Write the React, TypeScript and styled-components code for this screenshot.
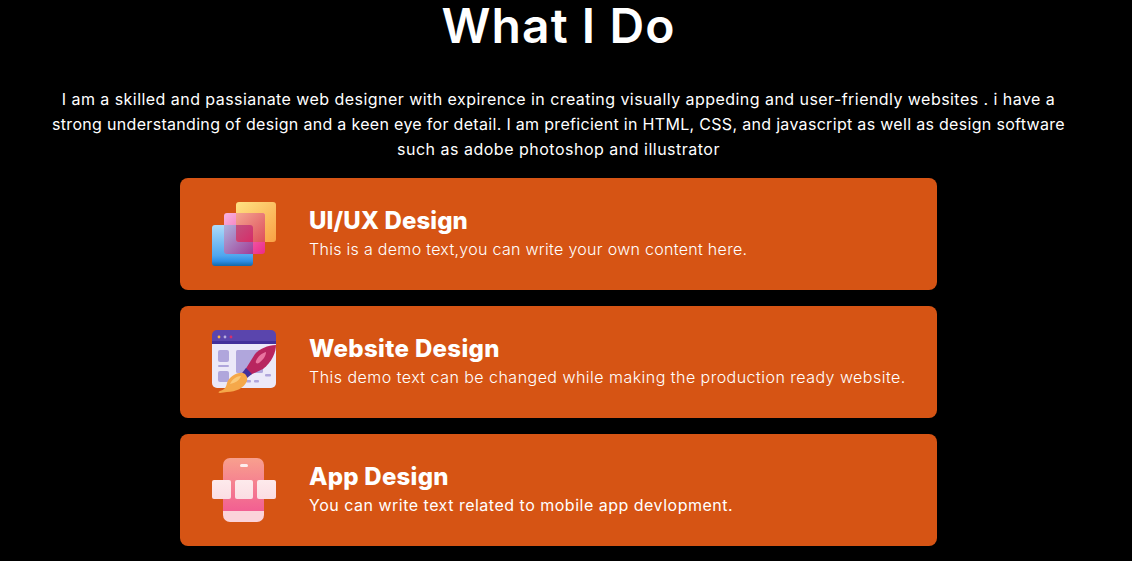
import styled, { createGlobalStyle } from 'styled-components'

const GlobalStyle = createGlobalStyle`
    html, body {
        margin: 0;
        padding: 0;
        background: #000;
        overflow: hidden;
    }
`

const Page = styled.section`
    display: flex;
    flex-direction: column;
    align-items: center;
    width: 1117px;
    height: 561px;
    overflow: hidden;
    color: #fff;
    font-family: "Inter", "Liberation Sans", sans-serif;
`

const Heading = styled.h1`
    margin: 0;
    height: 51px;
    font-size: 48px;
    line-height: 51px;
    font-weight: 600;
    letter-spacing: 1.1px;
`

const Intro = styled.p`
    margin: 36px 0 16px;
    width: 1040px;
    font-size: 16px;
    line-height: 25px;
    text-align: center;
`

const IntroLine = styled.span<{ $spacing: number }>`
    display: block;
    letter-spacing: ${p => p.$spacing}px;
`

const CardList = styled.div`
    display: flex;
    flex-direction: column;
    gap: 16px;
    width: 757px;
`

const Card = styled.article`
    display: flex;
    align-items: center;
    gap: 33px;
    height: 112px;
    padding: 0 32px;
    box-sizing: border-box;
    background: #d65414;
    border-radius: 8px;
`

const IconBox = styled.svg`
    flex: none;
    width: 64px;
    height: 64px;
`

const CardBody = styled.div`
    display: flex;
    flex-direction: column;
`

const CardTitle = styled.h2<{ $spacing: number }>`
    margin: 0 0 2px;
    font-size: 24px;
    line-height: 28px;
    font-weight: 800;
    letter-spacing: ${p => p.$spacing}px;
`

const CardText = styled.p<{ $weight: number; $spacing: number }>`
    margin: 0;
    font-size: 16px;
    line-height: 24px;
    white-space: nowrap;
    font-weight: ${p => p.$weight};
    letter-spacing: ${p => p.$spacing}px;
`

function LayersIcon() {
    return (
        <IconBox viewBox="0 0 64 64">
            <defs>
                <linearGradient id="yellowFill" x1="0" y1="0" x2="1" y2="1">
                    <stop offset="0" stopColor="#ffe283" />
                    <stop offset="1" stopColor="#f9a145" />
                </linearGradient>
                <linearGradient id="pinkFill" x1="0" y1="0" x2="1" y2="1">
                    <stop offset="0" stopColor="#f8b4e0" />
                    <stop offset="1" stopColor="#ec2a88" />
                </linearGradient>
                <linearGradient id="blueFill" x1="0" y1="0" x2="0" y2="1">
                    <stop offset="0" stopColor="#aedbf9" />
                    <stop offset="0.75" stopColor="#4fa6ee" />
                    <stop offset="0.88" stopColor="#2f8fe6" />
                    <stop offset="1" stopColor="#1468a8" />
                </linearGradient>
                <linearGradient id="pinkBlue" x1="0" y1="0" x2="1" y2="1">
                    <stop offset="0" stopColor="#aeb2dd" />
                    <stop offset="1" stopColor="#a23c96" />
                </linearGradient>
                <linearGradient id="pinkYellow" x1="0" y1="0" x2="1" y2="1">
                    <stop offset="0" stopColor="#f4a590" />
                    <stop offset="1" stopColor="#dd4f5c" />
                </linearGradient>
                <linearGradient id="tripleFill" x1="0" y1="0" x2="1" y2="1">
                    <stop offset="0" stopColor="#c2527f" />
                    <stop offset="1" stopColor="#d62c68" />
                </linearGradient>
            </defs>
            <rect x="24" y="0" width="40" height="40" rx="3" fill="url(#yellowFill)" />
            <rect x="12" y="11" width="41" height="41" rx="3" fill="url(#pinkFill)" />
            <rect x="0" y="23" width="41" height="41" rx="3" fill="url(#blueFill)" />
            <path d="M15 23H38a3 3 0 0 1 3 3V52H15a3 3 0 0 1-3-3V23z" fill="url(#pinkBlue)" />
            <path d="M24 11H50a3 3 0 0 1 3 3V40H27a3 3 0 0 1-3-3V11z" fill="url(#pinkYellow)" />
            <path d="M24 23H38a3 3 0 0 1 3 3V40H27a3 3 0 0 1-3-3V23z" fill="url(#tripleFill)" />
        </IconBox>
    )
}

function BrowserIcon() {
    return (
        <IconBox viewBox="0 0 64 64">
            <path d="M5 0H59a5 5 0 0 1 5 5V14H0V5a5 5 0 0 1 5-5z" fill="#5a45ad" />
            <rect y="11" width="64" height="3" fill="#43309a" />
            <path d="M0 14H64V53a5 5 0 0 1-5 5H5a5 5 0 0 1-5-5z" fill="#ece9f8" />
            <circle cx="7" cy="7" r="1.4" fill="#f6b545" />
            <circle cx="13" cy="7" r="1.4" fill="#b7aee0" />
            <circle cx="19" cy="7" r="1.4" fill="#d62f6e" />
            <g fill="#b0a6dc">
                <rect x="6" y="20" width="11" height="12" rx="2" />
                <rect x="6" y="35" width="11" height="2" rx="1" />
                <rect x="6" y="41" width="11" height="11" rx="2" />
                <rect x="24" y="20" width="27" height="23" rx="1.5" />
                <rect x="53" y="44" width="6" height="2.5" rx="1" />
                <rect x="34" y="50" width="5" height="2.5" rx="1" />
                <rect x="42" y="50" width="5" height="2.5" rx="1" />
            </g>
            <path d="M33 40L43 24C47 19 56 15 64 15C64 22 60 32 51 39L38 45z" fill="#b8255f" />
            <path d="M44 31C46 26 50 23 54 22C54 26 51 30 47 33C45 34 43 33 44 31z" fill="#e9739f" />
            <path d="M34 38L40 44L35 48L30 43z" fill="#43309a" />
            <path d="M31 43C34 44 36 47 35 51C32 58 24 62 15 62L8 63C6 63 6 62 8 61C12 60 14 58 15 53C17 47 25 42 31 43z" fill="#f5a84a" />
            <path d="M29 46C25 46 20 49 18 54C23 53 27 51 29 46z" fill="#fbc878" />
        </IconBox>
    )
}

function PhoneIcon() {
    return (
        <IconBox viewBox="0 0 64 64">
            <defs>
                <linearGradient id="phoneFill" x1="0" y1="0" x2="0" y2="1">
                    <stop offset="0" stopColor="#f8a08e" />
                    <stop offset="1" stopColor="#f25f92" />
                </linearGradient>
                <linearGradient id="tileFill" x1="0" y1="0" x2="0" y2="1">
                    <stop offset="0" stopColor="#fdeaec" />
                    <stop offset="1" stopColor="#fbdde3" />
                </linearGradient>
            </defs>
            <path d="M18 0H45a7 7 0 0 1 7 7V53H11V7a7 7 0 0 1 7-7z" fill="url(#phoneFill)" />
            <path d="M11 53H52V57a7 7 0 0 1-7 7H18a7 7 0 0 1-7-7z" fill="#fbd3da" />
            <rect x="28" y="6" width="8" height="3" rx="1.5" fill="#fdeeee" />
            <rect x="0" y="22" width="19" height="19" rx="2" fill="url(#tileFill)" />
            <rect x="23" y="22" width="18" height="19" rx="2" fill="url(#tileFill)" />
            <rect x="45" y="22" width="19" height="19" rx="2" fill="url(#tileFill)" />
        </IconBox>
    )
}

export default function App() {
    return (
        <Page>
            <GlobalStyle />
            <Heading>What I Do</Heading>
            <Intro>
                <IntroLine $spacing={0.45}>I am a skilled and passianate web designer with expirence in creating visually appeding and user-friendly websites . i have a</IntroLine>
                <IntroLine $spacing={0.31}>strong understanding of design and a keen eye for detail. I am preficient in HTML, CSS, and javascript as well as design software</IntroLine>
                <IntroLine $spacing={0.5}>such as adobe photoshop and illustrator</IntroLine>
            </Intro>
            <CardList>
                <Card>
                    <LayersIcon />
                    <CardBody>
                        <CardTitle $spacing={0.1}>UI/UX Design</CardTitle>
                        <CardText $weight={300} $spacing={0.3}>This is a demo text,you can write your own content here.</CardText>
                    </CardBody>
                </Card>
                <Card>
                    <BrowserIcon />
                    <CardBody>
                        <CardTitle $spacing={0.35}>Website Design</CardTitle>
                        <CardText $weight={300} $spacing={0.47}>This demo text can be changed while making the production ready website.</CardText>
                    </CardBody>
                </Card>
                <Card>
                    <PhoneIcon />
                    <CardBody>
                        <CardTitle $spacing={0.25}>App Design</CardTitle>
                        <CardText $weight={400} $spacing={0.5}>You can write text related to mobile app devlopment.</CardText>
                    </CardBody>
                </Card>
            </CardList>
        </Page>
    )
}
